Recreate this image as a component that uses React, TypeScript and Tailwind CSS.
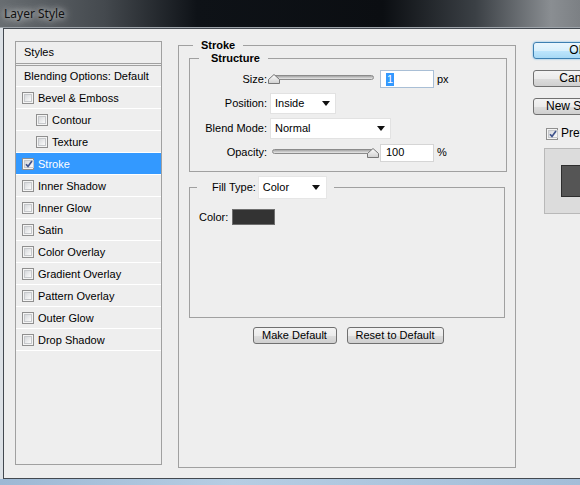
import React from 'react';

const effects: { label: string; sub?: boolean; checked?: boolean; selected?: boolean }[] = [
  { label: 'Bevel & Emboss' },
  { label: 'Contour', sub: true },
  { label: 'Texture', sub: true },
  { label: 'Stroke', checked: true, selected: true },
  { label: 'Inner Shadow' },
  { label: 'Inner Glow' },
  { label: 'Satin' },
  { label: 'Color Overlay' },
  { label: 'Gradient Overlay' },
  { label: 'Pattern Overlay' },
  { label: 'Outer Glow' },
  { label: 'Drop Shadow' },
];

const Checkbox: React.FC<{ checked?: boolean }> = ({ checked }) => (
  <span className="w-[12px] h-[12px] shrink-0 border border-[#8f8f8f] bg-[#f4f4f4] p-[1px] flex">
    <span className="flex-1 border border-[#c6c8cb] bg-[linear-gradient(135deg,#d6d8db,#fbfbfb)] flex items-center justify-center">
      {checked && (
        <svg width="8" height="8" viewBox="0 0 8 8">
          <path d="M1 4.2 L3 6.4 L7 1" fill="none" stroke="#3f538c" strokeWidth="1.7" />
        </svg>
      )}
    </span>
  </span>
);

const Select: React.FC<{ value: string; width: string }> = ({ value, width }) => (
  <div className={`${width} h-[21px] bg-white border border-[#e2e2e2] flex items-center justify-between pl-[4px] pr-[5px]`}>
    <span>{value}</span>
    <svg width="8" height="5" viewBox="0 0 8 5">
      <path d="M0 0 H8 L4 5 Z" fill="#111" />
    </svg>
  </div>
);

const Slider: React.FC<{ end?: boolean }> = ({ end }) => (
  <div className="relative w-[112px] h-[14px]">
    <div className="absolute left-[4px] right-[6px] top-[3px] h-[5px] rounded-full border border-[#8b8b8b] bg-[linear-gradient(#a4a4a4,#e8e8e8)]" />
    <svg
      className={`absolute top-[2px] ${end ? 'right-[1px]' : 'left-0'}`}
      width="12"
      height="10"
      viewBox="0 0 12 10"
    >
      <defs>
        <linearGradient id={end ? 'th2' : 'th1'} x1="0" y1="0" x2="0" y2="1">
          <stop offset="0" stopColor="#ffffff" />
          <stop offset="1" stopColor="#cfcfcf" />
        </linearGradient>
      </defs>
      <path d="M6 0.5 L11.5 5.5 V9.5 H0.5 V5.5 Z" fill={`url(#${end ? 'th2' : 'th1'})`} stroke="#777" />
    </svg>
  </div>
);

const TextBox: React.FC<{ children: React.ReactNode; focus?: boolean }> = ({ children, focus }) => (
  <div
    className={`w-[54px] h-[18px] bg-white border flex items-center pl-[5px] ${
      focus ? 'border-[#a9bfd6]' : 'border-[#d5d5d5]'
    }`}
  >
    {children}
  </div>
);

const Button: React.FC<{ children: React.ReactNode; width: string }> = ({ children, width }) => (
  <div
    className={`${width} h-[17px] rounded-[3px] border border-[#707070] bg-[linear-gradient(#f3f3f3_0%,#ebebeb_50%,#dddddd_51%,#cfcfcf_100%)] flex items-center justify-center`}
  >
    {children}
  </div>
);

export default function App() {
  return (
    <div className="w-[580px] h-[485px] overflow-hidden flex flex-col bg-[#a9c3dd] font-['Liberation_Sans',Arial,sans-serif] text-[11px] leading-[13px] text-black">
      {/* title bar */}
      <div className="h-[28px] shrink-0 border-b border-[#9ea4aa] bg-[linear-gradient(90deg,#686d71_0%,#44494e_18%,#0e1217_34%,#0b0e12_66%,#3b4045_82%,#8a8e92_95%,#7c8084_100%)] flex items-center pl-[4px]">
        <span className="font-['Noto_Sans',sans-serif] text-[12px] text-[#111] [text-shadow:0_0_6px_rgba(255,255,255,0.9),0_0_12px_rgba(255,255,255,0.6)]">
          Layer Style
        </span>
      </div>

      <div className="flex h-[451px] shrink-0">
        <div className="w-[3px] shrink-0 bg-[#dce1e6]" />
        <div className="flex-1 min-w-0 flex items-start bg-[#eeeeee] border-l border-t border-b border-[#434950] overflow-hidden pl-[11px]">
          {/* styles list */}
          <div className="w-[147px] h-[424px] shrink-0 mt-[12px] border border-[#a0a0a0] flex flex-col">
            <div className="h-[22px] border-b border-[#a0a0a0] flex items-center pl-[8px]">Styles</div>
            <div className="h-[22px] mt-[1px] border-t border-b border-t-[#a0a0a0] border-b-white flex items-center pl-[8px]">
              Blending Options: Default
            </div>
            {effects.map((e) => (
              <div
                key={e.label}
                className={`h-[22px] pt-[1px] border-b border-white flex items-center gap-[4px] ${
                  e.sub ? 'pl-[20px]' : 'pl-[6px]'
                } ${e.selected ? 'bg-[#3399ff] text-white' : ''}`}
              >
                <Checkbox checked={e.checked} />
                <span>{e.label}</span>
              </div>
            ))}
          </div>

          {/* stroke panel */}
          <fieldset className="w-[338px] h-[429px] shrink-0 mt-[10px] ml-[16px] border border-[#a0a0a0] pl-[10px] pr-[8px]">
            <legend className="ml-[4px] px-[8px] font-bold">Stroke</legend>

            <fieldset className="w-[318px] h-[120px] border border-[#a0a0a0]">
              <legend className="ml-[9px] pl-[12px] pr-[8px] font-bold">Structure</legend>

              <div className="mt-[5px] h-[18px] flex items-center">
                <span className="w-[77px] text-right">Size:</span>
                <div className="ml-[1px]">
                  <Slider />
                </div>
                <TextBox focus>
                  <span className="bg-[#3399ff] text-white px-[1px]">1</span>
                </TextBox>
                <span className="ml-[3px]">px</span>
              </div>

              <div className="mt-[5px] h-[21px] flex items-center">
                <span className="w-[77px] text-right">Position:</span>
                <div className="ml-[3px]">
                  <Select value="Inside" width="w-[66px]" />
                </div>
              </div>

              <div className="mt-[4px] h-[21px] flex items-center">
                <span className="w-[77px] text-right">Blend Mode:</span>
                <div className="ml-[3px]">
                  <Select value="Normal" width="w-[121px]" />
                </div>
              </div>

              <div className="mt-[4px] h-[19px] flex items-center">
                <span className="w-[77px] text-right">Opacity:</span>
                <div className="ml-[1px]">
                  <Slider end />
                </div>
                <TextBox>100</TextBox>
                <span className="ml-[3px]">%</span>
              </div>
            </fieldset>

            <fieldset className="w-[316px] h-[142px] mt-[4px] border border-[#a0a0a0]">
              <legend className="ml-[7px] pl-[15px] pr-[7px]">
                <div className="flex items-center gap-[2px]">
                  <span>Fill Type:</span>
                  <div className="h-[23px] w-[69px] bg-white border border-[#e6e6e6] flex items-center justify-between pl-[4px] pr-[6px]">
                    <span>Color</span>
                    <svg width="8" height="5" viewBox="0 0 8 5">
                      <path d="M0 0 H8 L4 5 Z" fill="#111" />
                    </svg>
                  </div>
                </div>
              </legend>
              <div className="mt-[10px] pl-[9px] flex items-center gap-[4px]">
                <span>Color:</span>
                <div className="w-[43px] h-[16px] bg-[#333333] border border-[#6e6e6e]" />
              </div>
            </fieldset>

            <div className="mt-[9px] flex justify-center gap-[10px]">
              <Button width="w-[84px]">Make Default</Button>
              <Button width="w-[97px]">Reset to Default</Button>
            </div>
          </fieldset>

          {/* right column */}
          <div className="w-[90px] shrink-0 mt-[13px] ml-[17px] flex flex-col text-[12px]">
            <div className="h-[17px] rounded-[3px] border border-[#3c7fb1] bg-[linear-gradient(#eaf6fd_0%,#d9f0fc_50%,#bee6fd_51%,#a7d9f5_100%)] shadow-[0_0_2px_#5fb2e8] flex items-center justify-center">
              OK
            </div>
            <div className="mt-[11px]">
              <Button width="w-[90px]">Cancel</Button>
            </div>
            <div className="mt-[11px]">
              <Button width="w-[90px]">New Style...</Button>
            </div>
            <div className="mt-[12px] ml-[13px] flex items-center gap-[3px]">
              <Checkbox checked />
              <span>Preview</span>
            </div>
            <div className="mt-[8px] ml-[11px] h-[66px] border border-[#b8b8b8] bg-[#dcdcdc] flex items-center pl-[16px]">
              <div className="w-[32px] h-[32px] bg-[#555555] border border-[#2e2e2e]" />
            </div>
          </div>
        </div>
      </div>
      <div className="flex-1 bg-[linear-gradient(90deg,#9db8d4,#b6cde3_40%,#a3bdd8)]" />
    </div>
  );
}
